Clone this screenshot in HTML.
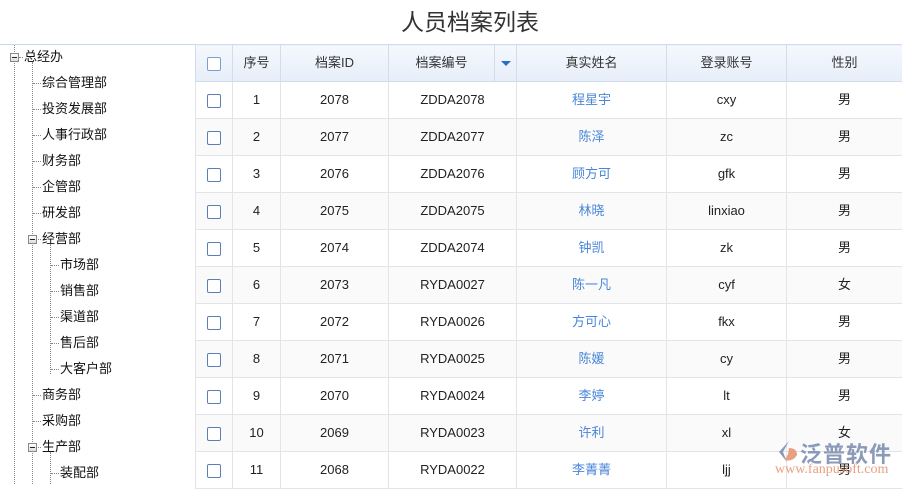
<!DOCTYPE html>
<html><head><meta charset="utf-8"><style>
*{margin:0;padding:0;box-sizing:border-box}
body{width:902px;height:484px;overflow:hidden;background:#fff;font-family:"Liberation Sans","Noto Sans CJK SC",sans-serif;position:relative;color:#222}
.title{position:absolute;left:0;width:940px;top:3px;text-align:center;font-size:23px;color:#333}
.topline{position:absolute;left:0;top:44px;width:902px;height:1px;background:#c8d6e8}
.left{position:absolute;left:0;top:45px;width:196px;height:439px;border-right:1px solid #c8d4e4}
.t{position:absolute;font-size:13px;line-height:16px;color:#111;white-space:nowrap}
.v{position:absolute;width:0;border-left:1px dotted #888}
.h{position:absolute;height:0;border-top:1px dotted #888}
.mb{position:absolute;width:9px;height:9px;border:1px solid #888;background:linear-gradient(#fff,#ddd)}
.mb:after{content:"";position:absolute;left:1px;top:3px;width:5px;height:1px;background:#222}
table{position:absolute;left:195px;top:44px;border-collapse:collapse;font-size:13px;table-layout:fixed;width:707px}
td,th{border:1px solid #e2e4e8;text-align:center;height:37px;padding:0;font-weight:normal;line-height:16px;vertical-align:middle}
th{background:linear-gradient(#f5f8fd,#e6eef9);color:#333;border-color:#d2ddeb}
tr:nth-child(odd) td{background:#fafafa}
.cb{display:inline-block;width:14px;height:14px;border:1px solid #5a7fb8;border-radius:2px;vertical-align:middle;background:#fff}
th .cb{border-color:#7aa0d0}
.n{color:#4a86d8}
.arrow{display:inline-block;width:0;height:0;border-left:5px solid transparent;border-right:5px solid transparent;border-top:5px solid #2a6ec8;vertical-align:middle}
.wm{position:absolute;left:775px;top:438px}
</style></head><body>
<div class="title">人员档案列表</div>
<div class="topline"></div>
<div class="left">
<div class="v" style="left:14px;top:0;height:439px"></div>
<div class="v" style="left:32px;top:17px;height:422px"></div>
<div class="v" style="left:50px;top:199px;height:130px"></div>
<div class="v" style="left:50px;top:407px;height:32px"></div>
</div>
<div class="mb" style="left:10px;top:53px"></div><div class="h" style="left:19px;top:57px;width:4px"></div>
<div class="t" style="left:24px;top:49px">总经办</div>
<div class="mb" style="left:28px;top:235px"></div>
<div class="mb" style="left:28px;top:443px"></div>

<div class="h" style="left:33px;top:83px;width:8px"></div><div class="t" style="left:42px;top:75px">综合管理部</div>
<div class="h" style="left:33px;top:109px;width:8px"></div><div class="t" style="left:42px;top:101px">投资发展部</div>
<div class="h" style="left:33px;top:135px;width:8px"></div><div class="t" style="left:42px;top:127px">人事行政部</div>
<div class="h" style="left:33px;top:161px;width:8px"></div><div class="t" style="left:42px;top:153px">财务部</div>
<div class="h" style="left:33px;top:187px;width:8px"></div><div class="t" style="left:42px;top:179px">企管部</div>
<div class="h" style="left:33px;top:213px;width:8px"></div><div class="t" style="left:42px;top:205px">研发部</div>
<div class="h" style="left:38px;top:239px;width:3px"></div><div class="t" style="left:42px;top:231px">经营部</div>
<div class="h" style="left:51px;top:265px;width:8px"></div><div class="t" style="left:60px;top:257px">市场部</div>
<div class="h" style="left:51px;top:291px;width:8px"></div><div class="t" style="left:60px;top:283px">销售部</div>
<div class="h" style="left:51px;top:317px;width:8px"></div><div class="t" style="left:60px;top:309px">渠道部</div>
<div class="h" style="left:51px;top:343px;width:8px"></div><div class="t" style="left:60px;top:335px">售后部</div>
<div class="h" style="left:51px;top:369px;width:8px"></div><div class="t" style="left:60px;top:361px">大客户部</div>
<div class="h" style="left:33px;top:395px;width:8px"></div><div class="t" style="left:42px;top:387px">商务部</div>
<div class="h" style="left:33px;top:421px;width:8px"></div><div class="t" style="left:42px;top:413px">采购部</div>
<div class="h" style="left:38px;top:447px;width:3px"></div><div class="t" style="left:42px;top:439px">生产部</div>
<div class="h" style="left:51px;top:473px;width:8px"></div><div class="t" style="left:60px;top:465px">装配部</div>

<table>
<colgroup><col style="width:37px"><col style="width:48px"><col style="width:108px"><col style="width:106px"><col style="width:22px"><col style="width:150px"><col style="width:120px"><col style="width:116px"></colgroup>
<tr><th><span class="cb"></span></th><th>序号</th><th>档案ID</th><th>档案编号</th><th><span class="arrow"></span></th><th>真实姓名</th><th>登录账号</th><th>性别</th></tr>
<tr><td><span class="cb"></span></td><td>1</td><td>2078</td><td colspan="2">ZDDA2078</td><td class="n">程星宇</td><td>cxy</td><td>男</td></tr>
<tr><td><span class="cb"></span></td><td>2</td><td>2077</td><td colspan="2">ZDDA2077</td><td class="n">陈泽</td><td>zc</td><td>男</td></tr>
<tr><td><span class="cb"></span></td><td>3</td><td>2076</td><td colspan="2">ZDDA2076</td><td class="n">顾方可</td><td>gfk</td><td>男</td></tr>
<tr><td><span class="cb"></span></td><td>4</td><td>2075</td><td colspan="2">ZDDA2075</td><td class="n">林晓</td><td>linxiao</td><td>男</td></tr>
<tr><td><span class="cb"></span></td><td>5</td><td>2074</td><td colspan="2">ZDDA2074</td><td class="n">钟凯</td><td>zk</td><td>男</td></tr>
<tr><td><span class="cb"></span></td><td>6</td><td>2073</td><td colspan="2">RYDA0027</td><td class="n">陈一凡</td><td>cyf</td><td>女</td></tr>
<tr><td><span class="cb"></span></td><td>7</td><td>2072</td><td colspan="2">RYDA0026</td><td class="n">方可心</td><td>fkx</td><td>男</td></tr>
<tr><td><span class="cb"></span></td><td>8</td><td>2071</td><td colspan="2">RYDA0025</td><td class="n">陈媛</td><td>cy</td><td>男</td></tr>
<tr><td><span class="cb"></span></td><td>9</td><td>2070</td><td colspan="2">RYDA0024</td><td class="n">李婷</td><td>lt</td><td>男</td></tr>
<tr><td><span class="cb"></span></td><td>10</td><td>2069</td><td colspan="2">RYDA0023</td><td class="n">许利</td><td>xl</td><td>女</td></tr>
<tr><td><span class="cb"></span></td><td>11</td><td>2068</td><td colspan="2">RYDA0022</td><td class="n">李菁菁</td><td>ljj</td><td>男</td></tr>
</table>
<div class="wm">
<svg width="24" height="24" viewBox="0 0 24 24" style="position:absolute;left:0;top:2px"><path d="M14 1 L4 12 L12 22 L8 12 Z" fill="#8a9ab8"/><path d="M14 8 Q22 8 22 15 Q18 22 10 20 L13 14 Z" fill="#e8a080"/></svg>
<div style="position:absolute;left:25px;top:-1px;font-size:22px;color:#8a9ab8;white-space:nowrap;letter-spacing:1px;font-weight:bold">泛普软件</div>
<div style="position:absolute;left:0;top:24px;font-family:'Liberation Serif',serif;font-size:14px;color:#e8a080;white-space:nowrap">www.fanpusoft.com</div>
</div>
</body></html>
